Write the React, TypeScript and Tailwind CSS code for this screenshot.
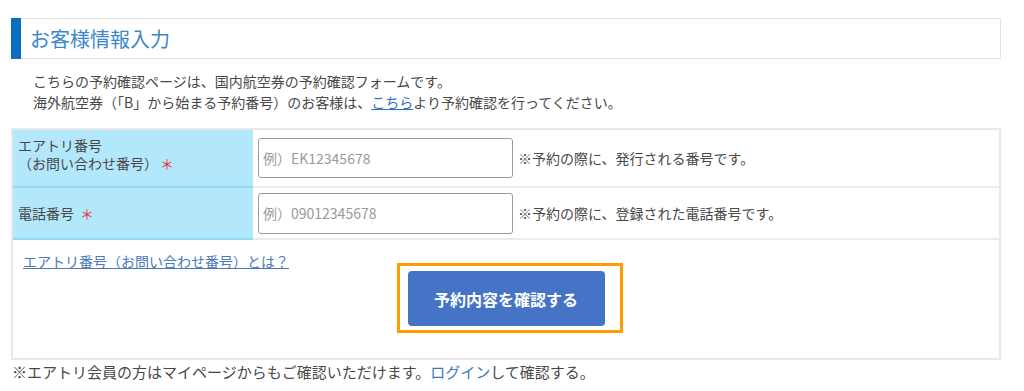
export default function App() {
  const font = { fontFamily: '"Noto Sans CJK JP", "Noto Sans", sans-serif' }

  return (
    <main className="min-h-[391px] w-[1024px] bg-white text-[#484848] pl-[11px] pt-[18px]" style={font}>
      {/* heading */}
      <div className="w-[990px] h-[41px] flex border border-[#e3e3e3] border-l-0">
        <div className="w-[10px] bg-[#0b6dc4] -my-px" />
        <h1 className="pl-[9px] text-[20px] leading-[39px] text-[#3a87cc]">お客様情報入力</h1>
      </div>

      <div className="pl-[22px] mt-[12px] text-[14px] leading-[21px]">
        <p>こちらの予約確認ページは、国内航空券の予約確認フォームです。</p>
        <p>
          海外航空券（「B」から始まる予約番号）のお客様は、
          <a href="#" className="text-[#2f6fc0] underline">こちら</a>
          より予約確認を行ってください。
        </p>
      </div>

      {/* form */}
      <div className="mt-[15px] w-[990px] border-2 border-[#e8e8e8] text-[14px]">
        <div className="flex h-[58px]">
          <div className="w-[240px] bg-[#b3e7fb] border-b-2 border-[#92d7f4] pl-[5px] pt-[6px] leading-[18px]">
            <p>エアトリ番号</p>
            <p>
              （お問い合わせ番号）<span className="text-[#f0323c] ml-[2px]">＊</span>
            </p>
          </div>
          <div className="flex-1 flex items-center border-b-2 border-[#ececec] pl-[5px]">
            <input
              className="w-[255px] h-[40px] border border-[#9a9a9a] rounded-[3px] px-[4px] text-[14px] placeholder:text-[#999] outline-none"
              placeholder="例）EK12345678"
              style={font}
            />
            <span className="ml-[5px]">※予約の際に、発行される番号です。</span>
          </div>
        </div>

        <div className="flex h-[52px]">
          <div className="w-[240px] bg-[#b3e7fb] border-b-2 border-[#92d7f4] pl-[5px] flex items-center">
            <p>
              電話番号<span className="text-[#f0323c] ml-[6px]">＊</span>
            </p>
          </div>
          <div className="flex-1 flex items-center border-b-2 border-[#ececec] pl-[5px]">
            <input
              className="w-[255px] h-[41px] border border-[#9a9a9a] rounded-[3px] px-[4px] text-[14px] placeholder:text-[#999] outline-none"
              placeholder="例）09012345678"
              style={font}
            />
            <span className="ml-[5px]">※予約の際に、登録された電話番号です。</span>
          </div>
        </div>

        <div className="grid">
          <a
            href="#"
            className="[grid-area:1/1] self-start justify-self-start ml-[10px] mt-[12px] leading-[18px] text-[#4b78b8] underline"
          >
            エアトリ番号（お問い合わせ番号）とは？
          </a>
          <div className="[grid-area:1/1] justify-self-center ml-[7px] mt-[23px] mb-[25px] w-[226px] h-[70px] border-[3px] border-[#ff9c00] pl-[8px] pt-[5px]">
            <button className="w-[197px] h-[55px] rounded-[4px] bg-[#4573c6] text-white text-[16px] font-bold" style={font}>
              予約内容を確認する
            </button>
          </div>
        </div>
      </div>

      <p className="pl-px pt-[2px] text-[15px] leading-[20px]">
        ※エアトリ会員の方はマイページからもご確認いただけます。
        <a href="#" className="text-[#3b78c3]">ログイン</a>
        して確認する。
      </p>
    </main>
  )
}
